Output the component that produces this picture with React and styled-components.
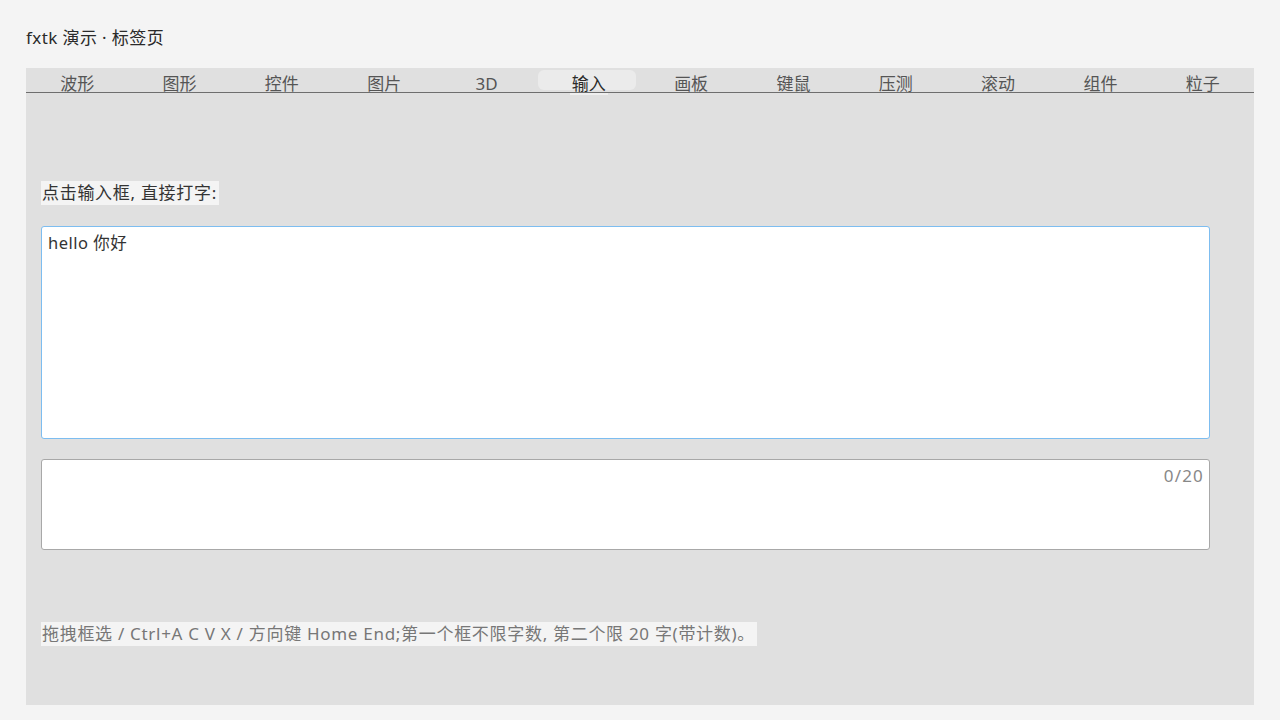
import React from "react";
import styled, { createGlobalStyle } from "styled-components";

const GlobalStyle = createGlobalStyle`
  html, body {
    margin: 0;
    padding: 0;
    background: #f4f4f4;
  }
  body {
    font-family: "Noto Sans", "Noto Sans CJK SC", sans-serif;
    color: #333;
  }
`;

const Page = styled.div`
  width: 1280px;
  height: 720px;
  box-sizing: border-box;
  padding: 26px 26px 15px 26px;
  display: flex;
  flex-direction: column;
`;

const Title = styled.div`
  font-size: 17px;
  line-height: 24px;
  height: 24px;
  margin-bottom: 18px;
  color: #2a2a2a;
  letter-spacing: 0.4px;
`;

const Panel = styled.div`
  flex: 1;
  background: #e0e0e0;
  display: flex;
  flex-direction: column;
`;

const TabBar = styled.div`
  display: flex;
  height: 24px;
  border-bottom: 1px solid #6e6e6e;
`;

const Tab = styled.div`
  flex: 1;
  position: relative;
  color: ${(p) => (p.$active ? "#2a2a2a" : "#555")};
  font-size: 17px;
  line-height: 17px;
  padding-top: 7px;
  text-align: center;

  ${(p) =>
    p.$active &&
    `
    &::before {
      content: "";
      position: absolute;
      left: 0;
      right: 4px;
      top: 2px;
      bottom: 2px;
      border-radius: 6px;
      background: #ebebeb;
    }
    &::after {
      content: "";
      position: absolute;
      left: 50%;
      transform: translateX(-50%);
      width: 38px;
      bottom: -3px;
      height: 2px;
      background: #efefef;
    }
  `}
`;

const TabText = styled.span`
  position: relative;
`;

const Body = styled.div`
  padding: 88px 44px 0 15px;
  display: flex;
  flex-direction: column;
  align-items: flex-start;
`;

const Note = styled.div`
  background: #f4f4f4;
  font-size: 17px;
  line-height: 24px;
  height: 24px;
  padding-left: 1px;
  padding-right: 2px;
  letter-spacing: 0.7px;
  color: ${(p) => p.$color || "#333"};
`;

const Field = styled.div`
  align-self: stretch;
  box-sizing: border-box;
  background: #fff;
  border: 1px solid ${(p) => (p.$focused ? "#7dbdf0" : "#a8a8a8")};
  border-radius: 3px;
  height: ${(p) => p.$height}px;
  margin-top: ${(p) => p.$top}px;
  padding: 5px 6px;
  font-size: 16.5px;
  line-height: 22px;
  letter-spacing: 0.5px;
  color: #333;
`;

const Counter = styled.div`
  text-align: right;
  color: #888;
  font-size: 17px;
  line-height: 22px;
  letter-spacing: 1.2px;
  margin-right: -1px;
`;

const Spacer = styled.div`
  height: 72px;
`;

const tabs = ["波形", "图形", "控件", "图片", "3D", "输入", "画板", "键鼠", "压测", "滚动", "组件", "粒子"];

export default function App() {
  return (
    <>
      <GlobalStyle />
      <Page>
        <Title>fxtk 演示 · 标签页</Title>
        <Panel>
          <TabBar>
            {tabs.map((t) => (
              <Tab key={t} $active={t === "输入"}>
                <TabText>{t}</TabText>
              </Tab>
            ))}
          </TabBar>
          <Body>
            <Note>点击输入框, 直接打字:</Note>
            <Field $focused $height={213} $top={21}>
              hello 你好
            </Field>
            <Field $height={91} $top={20}>
              <Counter>0/20</Counter>
            </Field>
            <Spacer />
            <Note $color="#777">
              拖拽框选 / Ctrl+A C V X / 方向键 Home End;第一个框不限字数, 第二个限 20 字(带计数)。
            </Note>
          </Body>
        </Panel>
      </Page>
    </>
  );
}
